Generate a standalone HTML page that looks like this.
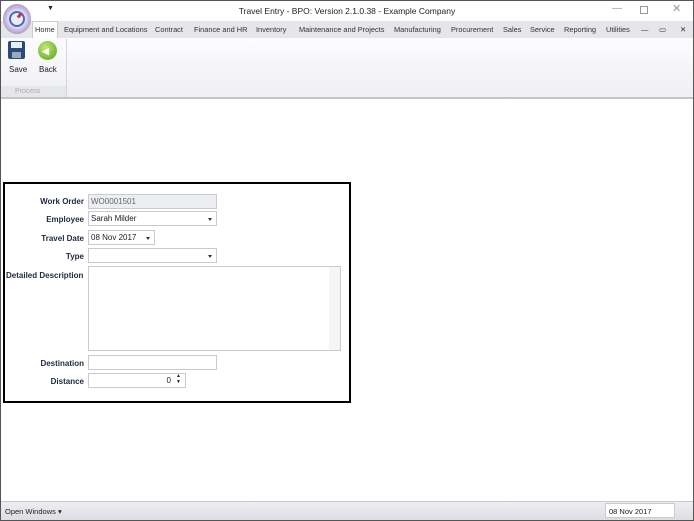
<!DOCTYPE html><html><head><style>
*{box-sizing:border-box;margin:0;padding:0}
body{width:694px;height:521px;position:relative;overflow:hidden;font-family:"Liberation Sans",sans-serif;font-size:8px;color:#222;background:#fff}
.a{position:absolute}
.t{position:absolute;top:25px;font-size:7.4px;color:#333;white-space:nowrap}
.lbl{position:absolute;font-weight:bold;font-size:8px;color:#1e2a40;text-align:right;width:84px;left:0}
.in{position:absolute;border:1px solid #c8ccd2;background:#fff;font-size:8px;padding:2px 2px;height:15px;line-height:9px}
.dd::after{content:"";position:absolute;right:4px;top:6px;border:2.5px solid transparent;border-top:3px solid #333}
</style></head><body>
<div class="a" style="left:0;top:0;width:694px;height:521px;border:1px solid #555;z-index:9;pointer-events:none"></div>
<div class="a" style="left:0;top:0;width:694px;height:21px;background:#fff"></div>
<div class="a" style="left:47px;top:5px;font-size:7px">▼</div>
<div class="a" style="left:0;width:694px;top:6px;text-align:center;font-size:8.5px;color:#222">Travel Entry - BPO: Version 2.1.0.38 - Example Company</div>
<div class="a" style="left:612px;top:3px;font-size:10px;color:#999">—</div>
<div class="a" style="left:640px;top:6px;width:8px;height:8px;border:1px solid #999"></div>
<div class="a" style="left:672px;top:2px;font-size:11px;color:#999">✕</div>
<div class="a" style="left:1px;top:21px;width:692px;height:17px;background:#e4e6ea"></div>
<div class="a" style="left:32px;top:21px;width:26px;height:18px;background:#fcfcfd;border:1px solid #ccc;border-bottom:none"></div>
<div class="t" style="left:35px">Home</div>
<div class="t" style="left:64px">Equipment and Locations</div>
<div class="t" style="left:155px">Contract</div>
<div class="t" style="left:194px">Finance and HR</div>
<div class="t" style="left:256px">Inventory</div>
<div class="t" style="left:299px">Maintenance and Projects</div>
<div class="t" style="left:394px">Manufacturing</div>
<div class="t" style="left:451px">Procurement</div>
<div class="t" style="left:503px">Sales</div>
<div class="t" style="left:530px">Service</div>
<div class="t" style="left:564px">Reporting</div>
<div class="t" style="left:606px">Utilities</div>
<div class="t" style="left:641px">—</div>
<div class="t" style="left:659px">▭</div>
<div class="t" style="left:680px">✕</div>
<div class="a" style="left:1px;top:38px;width:692px;height:60px;background:linear-gradient(#fcfcfd,#eeeff2)"></div>
<div class="a" style="left:1px;top:97px;width:692px;height:2px;background:#c4c6ca"></div>
<div class="a" style="left:66px;top:39px;width:1px;height:58px;background:#d4d6da"></div>
<div class="a" style="left:1px;top:86px;width:65px;height:11px;background:#e6e7ea"></div>
<div class="a" style="left:15px;top:88px;font-size:7px;color:#aaa">Process</div>
<div class="a" style="left:3px;top:4px;width:28px;height:30px;border-radius:50%;background:radial-gradient(circle,#fff 30%,#c8b8e8 60%,#9a88c8 100%);border:1px solid #aaa"></div>
<div class="a" style="left:9px;top:11px;width:16px;height:16px;border-radius:50%;border:2px solid #4a6ab0;background:#e8eef8"></div>
<div class="a" style="left:17px;top:14px;width:5px;height:3px;background:#d03030;transform:rotate(-50deg)"></div>
<div class="a" style="left:8px;top:41px;width:17px;height:18px;background:#2c4a78;border-radius:2px"></div>
<div class="a" style="left:11px;top:42px;width:11px;height:6px;background:#e8eef6"></div>
<div class="a" style="left:12px;top:52px;width:9px;height:6px;background:#9ab"></div>
<div class="a" style="left:9px;top:65px;font-size:8px">Save</div>
<div class="a" style="left:38px;top:41px;width:19px;height:19px;border-radius:50%;background:radial-gradient(circle at 40% 35%,#bfe870,#5aa020)"></div>
<div class="a" style="left:42px;top:46px;color:#fff;font-size:9px;font-weight:bold">◀</div>
<div class="a" style="left:39px;top:65px;font-size:8px">Back</div>
<div class="a" style="left:3px;top:182px;width:348px;height:221px;border:2px solid #000"></div>
<div class="lbl" style="top:197px">Work Order</div>
<div class="in" style="left:88px;top:194px;width:129px;background:#eceef1;color:#666">WO0001501</div>
<div class="lbl" style="top:215px">Employee</div>
<div class="in dd" style="left:88px;top:211px;width:129px">Sarah Milder</div>
<div class="lbl" style="top:234px">Travel Date</div>
<div class="in dd" style="left:88px;top:230px;width:67px">08 Nov 2017</div>
<div class="lbl" style="top:252px">Type</div>
<div class="in dd" style="left:88px;top:248px;width:129px"></div>
<div class="lbl" style="top:271px;left:6px;text-align:left;width:90px">Detailed Description</div>
<div class="in" style="left:88px;top:266px;width:253px;height:85px"></div>
<div class="a" style="left:329px;top:267px;width:11px;height:83px;background:#f4f5f7"></div>
<div class="lbl" style="top:359px">Destination</div>
<div class="in" style="left:88px;top:355px;width:129px"></div>
<div class="lbl" style="top:377px">Distance</div>
<div class="in" style="left:88px;top:373px;width:98px;text-align:right;padding-right:14px">0</div>
<div class="a" style="left:176px;top:373px;font-size:5px;line-height:6px">▲<br>▼</div>
<div class="a" style="left:1px;top:501px;width:692px;height:19px;background:linear-gradient(#eceef1,#dcdee2);border-top:1px solid #c8cacf"></div>
<div class="a" style="left:5px;top:507px;font-size:7.5px">Open Windows ▾</div>
<div class="a" style="left:605px;top:503px;width:70px;height:15px;background:#fff;border:1px solid #ccc;font-size:7.5px;padding:3px 3px">08 Nov 2017</div>
</body></html>
